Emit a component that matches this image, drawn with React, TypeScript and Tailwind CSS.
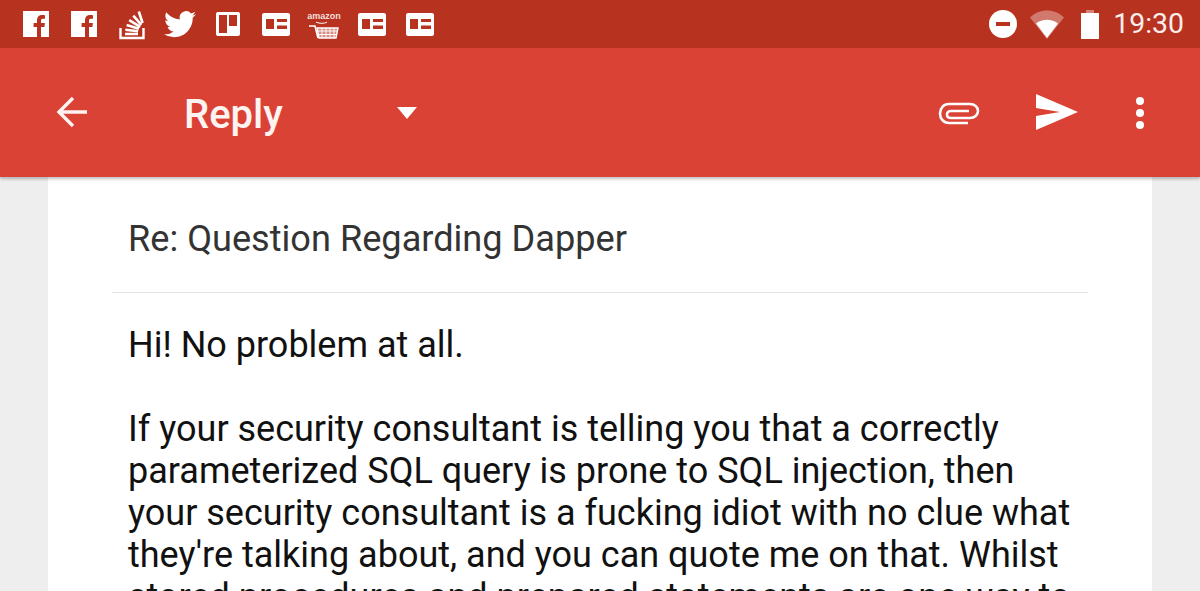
const ROBOTO = { fontFamily: 'Roboto, sans-serif' };

function Facebook() {
    return (
        <svg width="26" height="26" viewBox="0 0 26 26">
            <path
                fill="#fff"
                fillRule="evenodd"
                d="M0 0h26v26H18V16h3.400l.5-4H18V9.600c0-1.200.4-1.900 2-1.900h2V4.200c-.4 0-1.600-.2-3-.2-3 0-5 1.800-5 5.100V12h-3.400v4H14v10H0z"
            />
        </svg>
    );
}

function StackOverflow() {
    return (
        <svg width="26" height="32" viewBox="0 0 26 32" fill="none" stroke="#fff">
            <path d="M1.500 20v10h23V20" strokeWidth="2.400" />
            <path
                d="M6 26h13M6.300 21.800l12.800 1.400M7.600 17l12.300 3.700M10.200 12.200l11 6.600M14.300 7.600l8 9.200M19.800 3.500l3.800 11.500"
                strokeWidth="2.600"
            />
        </svg>
    );
}

function Twitter() {
    return (
        <svg width="32" height="27" viewBox="0 0 24 20">
            <path
                fill="#fff"
                d="M24 2.400c-.9.400-1.800.7-2.800.8 1-.6 1.800-1.600 2.200-2.700-1 .6-2 1-3.100 1.200A4.900 4.900 0 0 0 11.900 6.200C7.800 6 4.200 4 1.700.9c-1.300 2.300-.7 5.100 1.500 6.600-.8 0-1.600-.2-2.200-.6 0 2.300 1.600 4.400 3.900 4.900-.7.200-1.500.2-2.200.1.600 2 2.400 3.400 4.600 3.400A9.900 9.900 0 0 1 0 17.300 14 14 0 0 0 7.500 19.500c9.100 0 14.300-7.700 14-14.600 1-.7 1.800-1.500 2.500-2.500z"
            />
        </svg>
    );
}

function Trello() {
    return (
        <svg width="24" height="24" viewBox="0 0 24 24">
            <path
                fill="#fff"
                fillRule="evenodd"
                d="M2 0h20a2 2 0 0 1 2 2v20a2 2 0 0 1-2 2H2a2 2 0 0 1-2-2V2a2 2 0 0 1 2-2zM3 3v18h8V3zm10 0v11h8V3z"
            />
        </svg>
    );
}

function Newspaper() {
    return (
        <svg width="28" height="23" viewBox="0 0 28 23">
            <path
                fill="#fff"
                fillRule="evenodd"
                d="M2 0h24a2 2 0 0 1 2 2v19a2 2 0 0 1-2 2H2a2 2 0 0 1-2-2V2a2 2 0 0 1 2-2zM4 6v10h8V6zm11 0v3h10V6zm0 6.500v3.500h10v-3.500z"
            />
        </svg>
    );
}

function Amazon() {
    return (
        <div className="mt-[3px] flex w-[32px] flex-col items-center">
            <span className="text-[9px] leading-[9px] font-bold text-[#f6dfda]" style={{ fontFamily: 'Liberation Sans, sans-serif' }}>
                amazon
            </span>
            <svg width="32" height="19" viewBox="0 0 32 19" fill="none" stroke="#fff">
                <path d="M8 1.200c4 1.500 8 1.500 11 0" strokeWidth="1" />
                <path d="M1 5h6l3 12" strokeWidth="1.600" />
                <path d="M9 7h21l-2 10H11z" fill="#fff" fillOpacity=".45" strokeWidth="1.400" />
                <path d="M10 10h19M11 13.500h17M14 7v10M18 7v10M22 7v10M26 7v10" strokeWidth=".9" />
            </svg>
        </div>
    );
}

const STATUS_ICONS = [
    <Facebook />,
    <Facebook />,
    <StackOverflow />,
    <Twitter />,
    <Trello />,
    <Newspaper />,
    <Amazon />,
    <Newspaper />,
    <Newspaper />,
];

function StatusBar() {
    return (
        <div className="flex h-12 shrink-0 items-center justify-between bg-[#b83220] pr-[16px] pl-[12px]">
            <div className="flex">
                {STATUS_ICONS.map((icon, i) => (
                    <div key={i} className="flex h-12 w-12 items-center justify-center">
                        {icon}
                    </div>
                ))}
            </div>
            <div className="flex items-center">
                <svg width="28" height="28" viewBox="0 0 28 28">
                    <circle cx="14" cy="14" r="14" fill="#fff" />
                    <rect x="7" y="12" width="14" height="4" fill="#b83220" />
                </svg>
                <svg className="ml-[13px]" width="34" height="29" viewBox="0 0 34 29">
                    <path d="M0 7.500C9-2 25-2 34 7.500L17 29z" fill="#fff" fillOpacity=".35" />
                    <path d="M6 13.500c6.500-5 15.500-5 22 0L17 28z" fill="#fff" />
                </svg>
                <svg className="ml-[16px]" width="20" height="29" viewBox="0 0 20 29">
                    <path d="M6 0h8v3H6z" fill="#fff" fillOpacity=".4" />
                    <path d="M1 3h18v26H1z" fill="#fff" />
                </svg>
                <span className="ml-[13px] text-[28.4px] leading-none text-[#fbeeec]" style={ROBOTO}>
                    19:30
                </span>
            </div>
        </div>
    );
}

function Toolbar() {
    return (
        <div className="relative z-10 flex h-[129px] shrink-0 items-start bg-[#db4236] shadow-[0_2px_3px_rgba(0,0,0,0.25)]">
            <svg className="mt-[48px] ml-[56px]" width="31" height="32" viewBox="0 0 31 32" fill="none" stroke="#fdf3f1" strokeWidth="3.400">
                <path d="M31 16H3M17 2L3 16l14 14" />
            </svg>
            <span className="mt-[43px] ml-[97px] text-[40px] leading-[48px] font-medium text-[#fdf3f1]" style={ROBOTO}>
                Reply
            </span>
            <svg className="mt-[59px] ml-[114px]" width="20" height="12" viewBox="0 0 20 12">
                <path d="M0 0h20L10 12z" fill="#fff" />
            </svg>
            <div className="flex-1" />
            <svg className="mt-[49px]" width="42" height="32" viewBox="0 0 42 32" fill="none" stroke="#fff" strokeWidth="2.600">
                <path d="M30 26H11C5.500 26 2 21.500 2 16.500S5.500 7 11 7h21c4.500 0 8 3 8 7s-3.500 7-8 7H13c-2.500 0-4-1.500-4-3.500s1.500-3.500 4-3.500h18" />
            </svg>
            <svg className="mt-[46px] ml-[56px]" width="42" height="36" viewBox="0 0 42 36">
                <path d="M0 0l42 18L0 36V22l24-4L0 14z" fill="#fff" />
            </svg>
            <div className="mt-[49px] mr-[56px] ml-[58px] flex flex-col gap-[4px]">
                <div className="h-[8px] w-[8px] rounded-full bg-white" />
                <div className="h-[8px] w-[8px] rounded-full bg-white" />
                <div className="h-[8px] w-[8px] rounded-full bg-white" />
            </div>
        </div>
    );
}

export default function App() {
    return (
        <div className="flex h-[591px] w-[1200px] flex-col overflow-hidden bg-[#eeeeee]" style={ROBOTO}>
            <StatusBar />
            <Toolbar />
            <div className="mx-12 flex-1 overflow-hidden bg-white px-16">
                <div className="border-b border-[#e2e2e2] pt-[40px] pb-[32px] pl-[16px]">
                    <h1 className="text-[36.15px] leading-[43px] font-normal text-[#333333]">Re: Question Regarding Dapper</h1>
                </div>
                <div className="pt-[31px] pl-[16px] text-[36px] leading-[42px] whitespace-nowrap text-[#111111]">
                    <p>Hi! No problem at all.</p>
                    <p className="mt-[42px]">
                        If your security consultant is telling you that a correctly
                        <br />
                        parameterized SQL query is prone to SQL injection, then
                        <br />
                        your security consultant is a fucking idiot with no clue what
                        <br />
                        they're talking about, and you can quote me on that. Whilst
                        <br />
                        stored procedures and prepared statements are one way to
                    </p>
                </div>
            </div>
        </div>
    );
}
